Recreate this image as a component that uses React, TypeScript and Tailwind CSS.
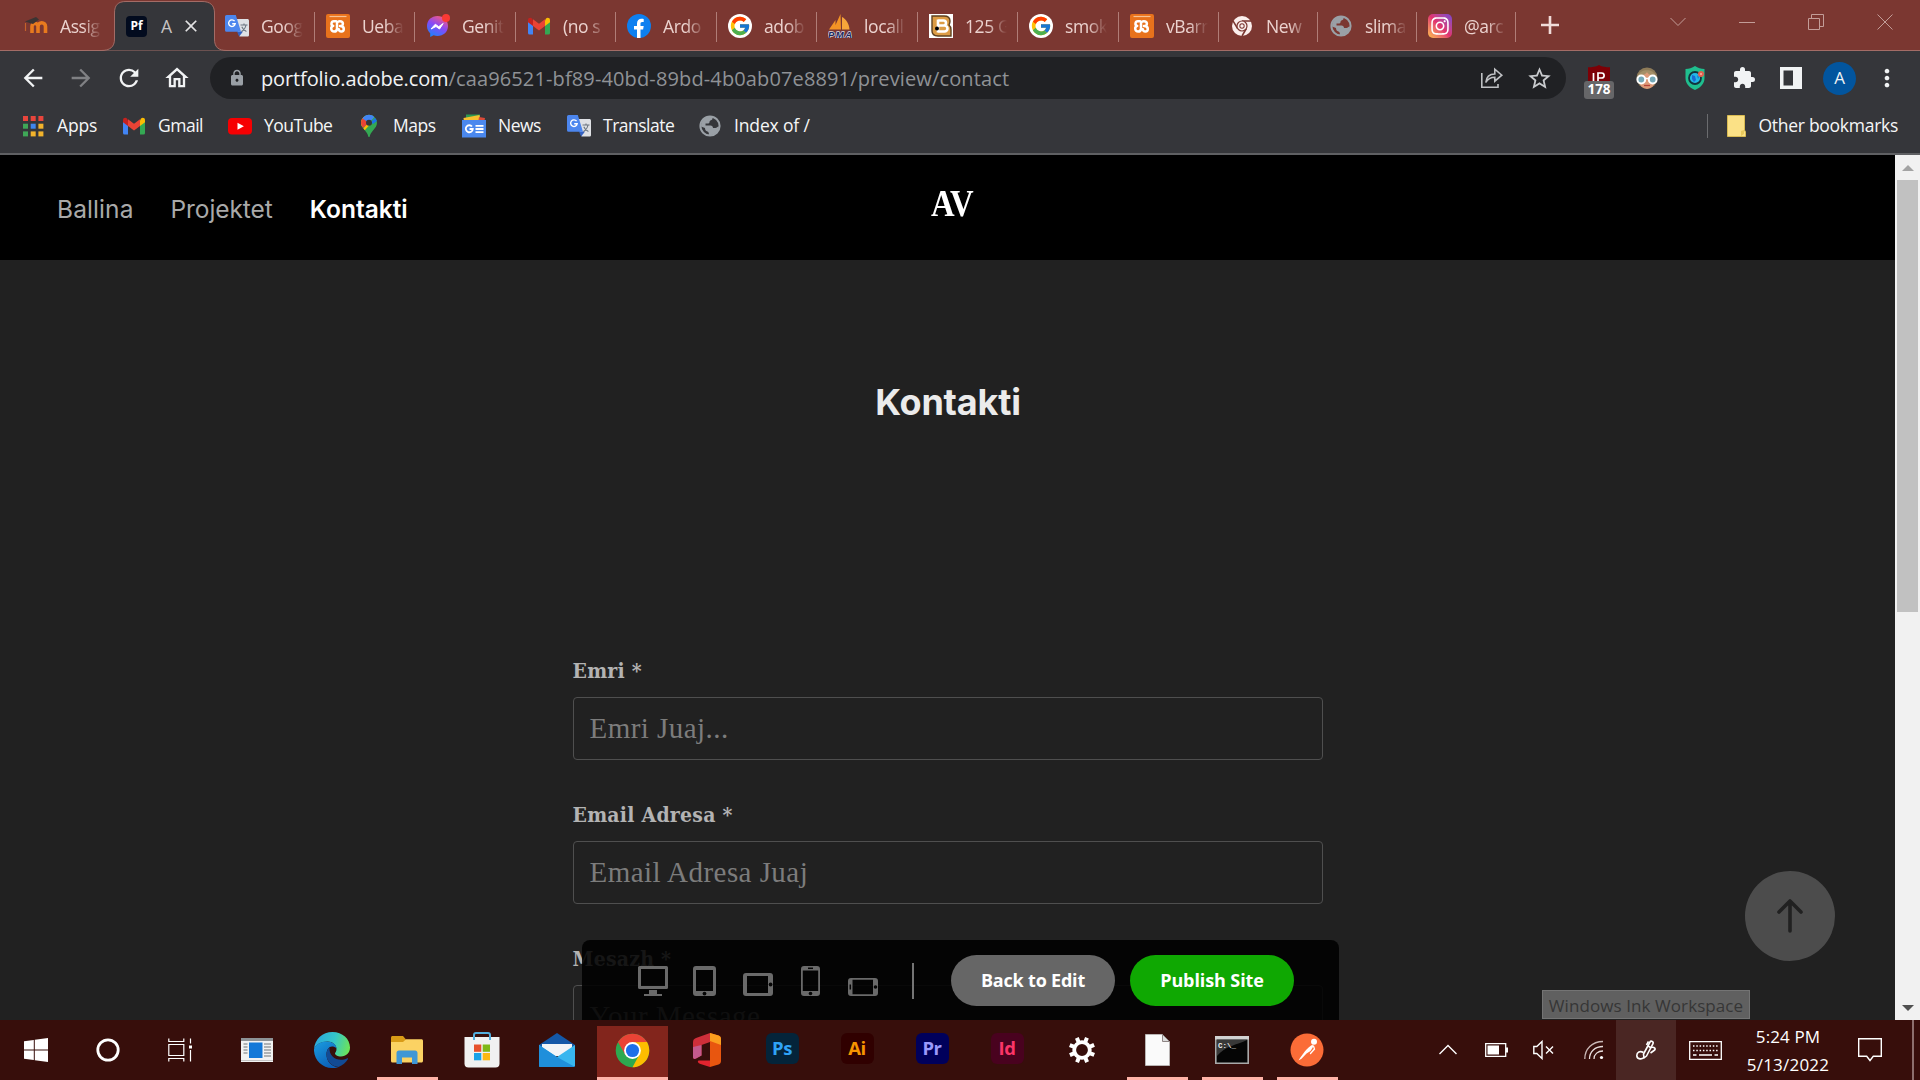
import React from "react";
import { MdArrowBack, MdArrowForward, MdRefresh, MdOutlineHome, MdLock, MdStarBorder, MdExtension, MdMoreVert, MdClose } from "react-icons/md";
import { FcGoogle } from "react-icons/fc";
import { FaInstagram } from "react-icons/fa";

/* ---------- site and bookmark icons ---------- */

const Moodle = () => (
  <svg viewBox="0 0 24 24" className="size-6">
    <path d="M8 19V12.5a3 3 0 0 1 6 0V19M14 12.5a3.4 3.4 0 0 1 7.5 0V19" fill="none" stroke="#e87a1e" strokeWidth="3.6" />
    <path d="M1.5 9v8" stroke="#c4622a" strokeWidth="1.2" />
    <path d="M1 7.5 12 3l3 2.5-6 4.5Z" fill="#3b3433" />
  </svg>
);

const PfIcon = () => (
  <div className="flex size-[21px] items-center justify-center rounded bg-[#020b1e] font-['Open_Sans',sans-serif] text-[12px] font-bold leading-none text-white">Pf</div>
);

const Translate = () => (
  <svg viewBox="0 0 24 24" className="size-6">
    <path d="M9 5h13.4c.9 0 1.6.7 1.6 1.6V21c0 .9-.7 1.6-1.6 1.6H14.5Z" fill="#dfe1e5" />
    <path d="m12 17.5 6 0-3.8 5Z" fill="#3461c1" />
    <path d="M1.6 1h9.2L16 17.8H1.6A1.6 1.6 0 0 1 0 16.200V2.600A1.600 1.600 0 0 1 1.600 1Z" fill="#4c86ee" />
    <path d="M9.600 7.200A3.300 3.300 0 1 0 10.200 9.700H7.200" fill="none" stroke="#fff" strokeWidth="1.400" />
    <path d="M15.500 11h7M19 9.400V11M21 11c-.6 3-2.600 5.400-4.600 6.500M16.800 12.800c.8 2 2.400 3.800 4.600 4.700" fill="none" stroke="#6b7580" strokeWidth="1.100" />
  </svg>
);

const Xampp = () => (
  <svg viewBox="0 0 24 24" className="size-6">
    <rect width="24" height="24" rx="2" fill="#e8721c" />
    <path d="M3.500 2.500h17" stroke="#f6c294" strokeWidth="1.200" />
    <path d="M10 7.200H8a2.400 2.400 0 0 0-.8 4.700A2.900 2.900 0 1 0 11 15V9.500c0-3 5.700-3 5.900.2.100 1.500-1 2.300-2.900 2.300 2.500 0 3.800 1 3.800 2.900 0 3.200-4.800 3.600-5 .3" fill="none" stroke="#fff" strokeWidth="2.500" strokeLinecap="round" strokeLinejoin="round" />
  </svg>
);

const Messenger = () => (
  <svg viewBox="0 0 24 24" className="size-6">
    <defs>
      <linearGradient id="msg" x1="0.2" y1="1" x2="0.7" y2="0">
        <stop offset="0" stopColor="#1486ff" />
        <stop offset=".55" stopColor="#8a48f6" />
        <stop offset="1" stopColor="#f55a80" />
      </linearGradient>
    </defs>
    <path d="M11.500 2C5.500 2 1 6.200 1 12c0 3 1.200 5.400 3.200 7.200V23l3.400-1.700c1.200.4 2.500.6 3.900.6 6 0 10.500-4.300 10.500-10S17.500 2 11.500 2Z" fill="url(#msg)" />
    <path d="m5 15 4.300-4.800 3.400 2.500L17.200 9.500 13.500 15l-3.500-2.500Z" fill="#fff" stroke="#fff" strokeLinejoin="round" />
    <circle cx="20" cy="4" r="4" fill="#fb3a34" />
  </svg>
);

const Gmail = () => (
  <svg viewBox="0 0 24 24" className="size-6">
    <path d="M1 6.500V19a1.600 1.600 0 0 0 1.600 1.600H6V11Z" fill="#4285f4" />
    <path d="M23 6.500V19a1.600 1.600 0 0 1-1.600 1.600H18V11Z" fill="#34a853" />
    <path d="M18 6.500V12l5-3.800V6.200c0-2.400-2.400-3-4-1.800Z" fill="#fbbc04" />
    <path d="M1 6.200V8.200L6 12V6.500L5 4.400C3.400 3.200 1 3.800 1 6.200Z" fill="#c5221f" />
    <path d="M6 12V5.200l6 4.500 6-4.500V12l-6 4.500Z" fill="#ea4335" />
  </svg>
);

const Facebook = () => (
  <svg viewBox="0 0 24 24" className="size-6">
    <circle cx="12" cy="12" r="12" fill="#0d7ff0" />
    <path d="M10 24v-8.500H7V12h3V9.500C10 6.400 11.800 4.800 14.500 4.800c1 0 2.200.2 2.200.2v3h-1.500c-1.300 0-1.700.8-1.700 1.600V12h3.200l-.6 3.500h-2.600V24Z" fill="#fff" />
  </svg>
);

const Google = () => (
  <div className="flex size-6 items-center justify-center rounded-full bg-white">
    <FcGoogle className="size-[22px]" />
  </div>
);

const Pma = () => (
  <svg viewBox="0 0 24 24" className="size-6">
    <path d="M12.500 0 13 15.500H5.500ZM7.500 6v9.500H1Z" fill="#f39325" />
    <path d="M14 3c4 2 7 6.500 7.500 12.500h-7.500Z" fill="#f7a63a" />
    <text x="0" y="23.500" textLength="24" fontFamily="Liberation Sans, sans-serif" fontSize="9.500" fontWeight="bold" fontStyle="italic" fill="#20285e" stroke="#d9d6e2" strokeWidth="1.400" paintOrder="stroke">PMA</text>
  </svg>
);

const BIcon = () => (
  <svg viewBox="0 0 24 24" className="size-6">
    <path d="M0 0h24v24H0Z" fill="#fff" />
    <path d="M3 2h12c4 0 6 2 6 5 0 2-.5 3-1 4 1.500 1 2 3 2 5v6H9c-4 0-6-2-6-5Z" fill="#dc9c45" stroke="#5d4120" strokeWidth="1.400" />
    <path d="M9 6.500h5.500a2.400 2.400 0 0 1 0 5H9h6.500a3 3 0 0 1 0 6H9M9 5.500v13" fill="none" stroke="#fff" strokeWidth="2.600" />
    <circle cx="8" cy="14.500" r="2" fill="#000" />
  </svg>
);

const ChromeWhite = () => (
  <svg viewBox="0 0 24 24" className="size-6">
    <circle cx="12" cy="12" r="10" fill="#fbeeec" />
    <path d="M12 7H21M7.600 14.500 3 6.800M16.400 14.500 12 22" stroke="#7b3731" strokeWidth="1.500" />
    <circle cx="12" cy="12" r="5.600" fill="#7b3731" />
    <circle cx="12" cy="12" r="4.400" fill="#fbeeec" />
    <circle cx="12" cy="12" r="2.700" fill="#7b3731" />
    <circle cx="12" cy="12" r="1.700" fill="#fbeeec" />
  </svg>
);

const Globe = () => (
  <svg viewBox="0 0 24 24" className="size-6">
    <circle cx="12" cy="12" r="9.600" fill="none" stroke="#9aa0a6" strokeWidth="2" />
    <path d="M3 12.500C3 6 8 2 14 2.500c1 1.500.5 3-.5 3.500s-2 .5-2 2c0 1-.8 1.500-2 1.500H7.500v2h5c1.500 0 2.500 1.200 2.500 2.500h2.500c1.500 0 1.500-1.500 3.500-1.500-.5 5.500-4.500 9-10 9 0-2-.2-3.500-1.500-4-2-.5-2.500-2-2.500-3.500Z" fill="#9aa0a6" />
  </svg>
);

const Insta = () => (
  <div className="flex size-6 items-center justify-center rounded-[5px] bg-linear-to-tr from-[#fdbd45] via-[#e0316f] to-[#7a3fd0]">
    <FaInstagram className="size-5 text-white" />
  </div>
);

const AppsGrid = () => (
  <svg viewBox="0 0 24 24" className="size-6">
    {["#e8453c", "#e8453c", "#e8453c", "#3fa757", "#3f86ee", "#f2b32c", "#3fa757", "#f2b32c", "#f2b32c"].map((c, i) => (
      <rect key={i} x={2 + (i % 3) * 7.700} y={2 + Math.floor(i / 3) * 7.700} width="5" height="5" fill={c} />
    ))}
  </svg>
);

const YouTube = () => (
  <svg viewBox="0 0 24 24" className="size-6">
    <rect y="4" width="24" height="16.500" rx="4" fill="#f60002" />
    <path d="m9.500 8.800 6.400 3.500-6.400 3.500Z" fill="#fff" />
  </svg>
);

const MapsPin = () => (
  <svg viewBox="0 0 24 24" className="size-6">
    <defs>
      <clipPath id="pin"><path d="M12 .8a8 8 0 0 0-8 8c0 3 1.600 5 3.600 7.300 2 2.500 3.200 4 3.700 6.400.2.800 1.200.8 1.400 0 .5-2.400 1.700-3.900 3.700-6.400C18.400 13.800 20 11.800 20 8.800a8 8 0 0 0-8-8Z" /></clipPath>
    </defs>
    <g clipPath="url(#pin)">
      <path d="M0 0h24v24H0Z" fill="#34a853" />
      <path d="M2 17 14 3 2 2Z" fill="#fbbc04" />
      <path d="M2 20 8 16 16 7 12 7Z" fill="#fbbc04" />
      <path d="M2 8 6 3.500 12 8.500 6 14Z" fill="#ea4335" />
      <path d="M5 4 10 0H20L12 9Z" fill="#4285f4" />
      <path d="M14 8 20 2v5l-4 3Z" fill="#1a73e8" />
    </g>
    <circle cx="12" cy="8.800" r="3" fill="#35363a" />
  </svg>
);

const News = () => (
  <svg viewBox="0 0 24 24" className="size-6">
    <path d="M4 .5h14V9H4Z" fill="#2f9b50" />
    <path d="m1.500 4 16-3 1 7H2Z" fill="#f7c02f" />
    <path d="m17 3 6 1-1 5h-6Z" fill="#dc4a38" />
    <path d="M0 6h24v17.500H0Z" fill="#4a88ee" />
    <path d="M10 12.500A3.500 3.500 0 1 0 10.800 15H7.500M13.500 11.800h8M13.500 15h8M13.500 18.200h8" fill="none" stroke="#fff" strokeWidth="1.800" />
  </svg>
);

/* ---------- toolbar icons ---------- */

const Share = () => (
  <svg viewBox="0 0 24 24" className="size-6 text-[#bfc1c4]" fill="none" stroke="currentColor" strokeWidth="1.600">
    <path d="M1.800 7v14.200H18V18" />
    <path d="M5.800 16.500c.5-5.500 4-8.500 9-8.500V3.200l7 6-7 6v-4c-4 0-7 1.500-9 5.300Z" />
  </svg>
);

const UBlock = () => (
  <div className="relative flex h-[42px] w-[30px] justify-center pt-2">
    <svg viewBox="0 0 22 22" className="size-[22px]">
      <path d="M11 0c3 2 7 2.200 11 2.200V16H0V2.200C4 2.200 8 2 11 0Z" fill="#7d0006" />
      <path d="M5.500 8v8M10 16V8h3.500c3.500 0 3.500 5 0 5H10" fill="none" stroke="#fff" strokeWidth="1.700" />
    </svg>
    <span className="absolute bottom-0 left-0 flex h-[18px] w-[30px] items-center justify-center rounded-[3px] bg-[#666668] font-['Open_Sans',sans-serif] text-[13.500px] font-bold leading-none text-white">178</span>
  </div>
);

const Face = () => (
  <svg viewBox="0 0 22 22" className="size-[22px]">
    <circle cx="11" cy="11" r="10.500" fill="#8e7b58" />
    <ellipse cx="11" cy="13.500" rx="8" ry="8.500" fill="#dd9a78" />
    <path d="M2 9C4 2 17 1 20 9c-5 0-8-2-9-4-1 2-5 4-9 4Z" fill="#a48f67" />
    <circle cx="5.300" cy="12.500" r="3.900" fill="#75a9b8" stroke="#fff" strokeWidth="2" />
    <circle cx="16.700" cy="12.500" r="3.900" fill="#75a9b8" stroke="#fff" strokeWidth="2" />
    <path d="M9 11.500h4" stroke="#fff" strokeWidth="1.500" />
    <path d="M8 18.500h6" stroke="#b5443a" strokeWidth="1.300" />
  </svg>
);

const Shield = () => (
  <svg viewBox="0 0 20 24" className="h-6 w-5">
    <path d="M10 0c3 2 6 3 9.500 3v9c0 6-4 9.500-9.500 12C4.500 21.500.5 18 .5 12V3C4 3 7 2 10 0Z" fill="#1fbf8e" />
    <circle cx="10" cy="12" r="6" fill="#22b8e6" stroke="#12343d" strokeWidth="1.800" />
    <path d="m7 9 3 1 1 4-2 2-2-3ZM12 9l2 2-1 2Z" fill="#1a6ad0" />
    <circle cx="16" cy="8" r="3" fill="#e2604e" />
    <circle cx="16" cy="8" r="1" fill="#f6b5a8" />
  </svg>
);

/* ---------- preview bar icons ---------- */

const Desktop = () => (
  <svg viewBox="0 0 30 30" className="h-[30px] w-[30px]" fill="#6a6a6a">
    <path fillRule="evenodd" d="M1.500 0h27A1.500 1.500 0 0 1 30 1.500v20a1.500 1.500 0 0 1-1.500 1.500h-27A1.500 1.500 0 0 1 0 21.500v-20A1.500 1.500 0 0 1 1.500 0ZM3 3v17h24V3Z" />
    <path d="M11 24h8v4h5v2H6v-2h5Z" />
  </svg>
);

const Tablet = () => (
  <svg viewBox="0 0 23 30" className="h-[30px] w-[23px]">
    <path fill="#6a6a6a" fillRule="evenodd" d="M3 0h17a3 3 0 0 1 3 3v24a3 3 0 0 1-3 3H3a3 3 0 0 1-3-3V3a3 3 0 0 1 3-3ZM3 4v21h17V4Z" />
    <circle cx="11.500" cy="27.600" r="1.900" fill="#050505" />
  </svg>
);

const TabletWide = () => (
  <svg viewBox="0 0 30 23" className="h-[23px] w-[30px]">
    <path fill="#6a6a6a" fillRule="evenodd" d="M3 0h24a3 3 0 0 1 3 3v17a3 3 0 0 1-3 3H3a3 3 0 0 1-3-3V3a3 3 0 0 1 3-3ZM4 3v17h21V3Z" />
    <circle cx="27.600" cy="11.500" r="1.900" fill="#050505" />
  </svg>
);

const Phone = () => (
  <svg viewBox="0 0 19 30" className="h-[30px] w-[19px]">
    <path fill="#6a6a6a" fillRule="evenodd" d="M3 0h13a3 3 0 0 1 3 3v24a3 3 0 0 1-3 3H3a3 3 0 0 1-3-3V3a3 3 0 0 1 3-3ZM1.800 4.500v20.500h15.400V4.500Z" />
    <path d="M7 2.300h5" stroke="#050505" strokeWidth="1.500" />
    <circle cx="9.500" cy="27.500" r="1.800" fill="#050505" />
  </svg>
);

const PhoneWide = () => (
  <svg viewBox="0 0 30 18" className="h-[18px] w-[30px]">
    <path fill="#6a6a6a" fillRule="evenodd" d="M3 0h24a3 3 0 0 1 3 3v12a3 3 0 0 1-3 3H3a3 3 0 0 1-3-3V3a3 3 0 0 1 3-3ZM4.500 1.800v14.400H25V1.800Z" />
    <path d="M2.300 6.500v5" stroke="#050505" strokeWidth="1.500" />
    <circle cx="27.500" cy="9" r="1.800" fill="#050505" />
  </svg>
);

/* ---------- taskbar icons ---------- */

const Windows = () => (
  <svg viewBox="0 0 24 24" className="size-6" fill="#fff">
    <path d="M0 3.300 9.800 2v9.500H0ZM10.800 1.800 24 0v11.500H10.800ZM0 12.500h9.800V22L0 20.700ZM10.800 12.500H24V24l-13.200-1.800Z" />
  </svg>
);

const Cortana = () => (
  <svg viewBox="0 0 24 24" className="size-6"><circle cx="12" cy="12" r="10.200" fill="none" stroke="#fff" strokeWidth="2.800" /></svg>
);

const TaskView = () => (
  <svg viewBox="0 0 24 24" className="size-6" fill="none" stroke="#fff" strokeWidth="1.200">
    <path d="M.8 6.500h15v11h-15ZM.8.500V3.500h15V.5M.8 23.500v-3h15v3M22.500.5v5M22.500 12v11.500" />
    <path d="M21 7.500h3v3h-3Z" fill="#fff" stroke="none" />
  </svg>
);

const Reader = () => (
  <svg viewBox="0 0 32 24" className="h-6 w-8">
    <path d="M0 0h32v24H0Z" fill="#f2f2f2" />
    <path d="M0 0h32v3H0Z" fill="#8d9296" />
    <path d="M8 4.500h13.500V20H8Z" fill="#1378d8" />
    <path d="M2.500 6h4M2.500 9h4M2.500 12h4M2.500 15h4M23 6h7M23 9h7M23 12h7M23 15h7M23 18h7" stroke="#6e7479" strokeWidth="1.200" />
    <path d="M0 22.500h32" stroke="#c4c4c4" />
  </svg>
);

const Edge = () => (
  <svg viewBox="0 0 36 36" className="size-9">
    <defs>
      <linearGradient id="e1" x1="0" y1="0.300" x2="1" y2="0.500">
        <stop offset="0" stopColor="#2aa6dd" /><stop offset=".55" stopColor="#35c6c9" /><stop offset="1" stopColor="#6be35b" />
      </linearGradient>
      <linearGradient id="e2" x1="0" y1="0" x2="0.600" y2="1">
        <stop offset="0" stopColor="#1a9de0" /><stop offset="1" stopColor="#0c5fb8" />
      </linearGradient>
    </defs>
    <path d="M0 17C.8 7 8.500 0 18.500 0 28.500 0 36 7 36 15.500c0 5.500-4 9-9 9-3.500 0-6-1.500-6-3 0-1 1.500-1.800 1.500-4.500 0-4-4-7.500-9-7.500C7 9.500 2 12.500 0 17Z" fill="url(#e1)" />
    <path d="M0 17c2-5 7-7.500 13-7.500 5.500 0 9.500 3 9.500 7-1-1.500-3-2-4.500-2-3 0-5.500 3-5.500 8 0 7 5 12 12 13C21.500 36 19.500 36 18 36 8 36-.5 27.500 0 17Z" fill="url(#e2)" />
    <path d="M15.500 15.500c-2 1.300-3 4-3 7 0 6.500 5 12 12 12.500 4-1.500 7.500-4.500 9.500-8 .3-.7-.3-1-.8-.7-2 1-4 1.500-6.200 1.500-6.500 0-12-4.500-11.500-12.300Z" fill="#124a94" />
  </svg>
);

const Explorer = () => (
  <svg viewBox="0 0 32 28" className="h-7 w-8">
    <path d="M0 1.500C0 .7.700 0 1.500 0H12l3 3.500V7H0Z" fill="#d99b17" />
    <path d="M0 6h12l3-2.700h15.500c.8 0 1.500.7 1.500 1.500V25c0 .8-.7 1.500-1.500 1.500h-29A1.500 1.500 0 0 1 0 25Z" fill="#fbd263" />
    <path d="M5.500 28V17c0-1.400 1-2.500 2.500-2.500h16c1.500 0 2.500 1.100 2.500 2.500v11H21v-6.500H11V28Z" fill="#3f97d6" />
  </svg>
);

const Store = () => (
  <svg viewBox="0 0 36 36" className="size-9">
    <path d="M10 7V3a2 2 0 0 1 2-2h12a2 2 0 0 1 2 2v4" fill="none" stroke="#53aede" strokeWidth="2" />
    <path d="M.5 5h35v26.500a4 4 0 0 1-4 4h-27a4 4 0 0 1-4-4Z" fill="#f1f1f1" />
    <path d="M10 5V8M26 5V8" stroke="#53aede" strokeWidth="2" />
    <path d="M10 12.500h7.300v7.300H10Z" fill="#e6502a" />
    <path d="M18.700 12.500H26v7.300h-7.300Z" fill="#7fb818" />
    <path d="M10 21h7.300v7.300H10Z" fill="#1aa2e8" />
    <path d="M18.700 21H26v7.300h-7.300Z" fill="#fbb813" />
  </svg>
);

const Mail = () => (
  <svg viewBox="0 0 36 34" className="h-[34px] w-9">
    <path d="M0 12 18 0l18 12v5H0Z" fill="#1458a8" />
    <path d="M3 11h30v12H3Z" fill="#f1f4f7" />
    <path d="M0 12l18 12L36 12v20.500c0 .8-.7 1.500-1.500 1.500h-33A1.500 1.500 0 0 1 0 32.500Z" fill="#38b6ef" />
    <path d="M0 12 18 24 36 34H1.500A1.500 1.500 0 0 1 0 32.500Z" fill="#1f8fdb" />
  </svg>
);

const Chrome = () => (
  <svg viewBox="0 0 48 48" className="size-[35px]">
    <circle cx="24" cy="24" r="23" fill="#2da94f" />
    <path d="M43.900 12.500A23 23 0 0 1 24 47L33.500 29.500 24 12.500Z" fill="#fdbd00" />
    <path d="M4.100 12.500a23 23 0 0 1 39.800 0L24 12.800 14.500 30.500Z" fill="#ea4335" />
    <circle cx="24" cy="24" r="11.500" fill="#fff" />
    <circle cx="24" cy="24" r="9" fill="#1e6fe8" />
  </svg>
);

const Office = () => (
  <svg viewBox="0 0 28 34" className="h-[34px] w-7">
    <path d="M0 9.500C0 7 1 5.700 3 5L17 0v9L8.500 12v10.500L3 25.500c-2 1-3 0-3-1.500Z" fill="#cf2f3a" />
    <path d="M17 0l8.500 2.500C27 3 28 4 28 6v22c0 2-1 3-2.500 3.500L17 34Z" fill="#e8560f" />
    <path d="M17 0l8.500 2.500C27 3 28 4 28 6v6L17 8Z" fill="#fb9e1e" />
    <path d="M6 27.500h11V34L7.500 31C4 29.800 4.500 27.500 6 27.500Z" fill="#e2242f" />
    <path d="M0 14v10c0 1.500 1 2.500 3 1.500l5.500-3V12Z" fill="#c45a8c" />
  </svg>
);

const Tile = ({ label, cls }: { label: string; cls: string }) => (
  <div className={`-mt-[3px] flex h-[31px] w-[33px] items-center justify-center rounded-[6px] pb-px font-['Open_Sans',sans-serif] text-[18.500px] font-bold leading-none tracking-[-0.400px] ${cls}`}>{label}</div>
);

const Gear = () => (
  <svg viewBox="0 0 28 28" className="size-7">
    <circle cx="14" cy="14" r="7.800" fill="none" stroke="#fff" strokeWidth="3.800" />
    <path d="M14 .8v5M14 22.200v5M.8 14h5M22.200 14h5M4.700 4.700l3.500 3.500M19.800 19.800l3.500 3.500M4.700 23.300l3.500-3.500M19.800 8.200l3.500-3.500" stroke="#fff" strokeWidth="4" transform="rotate(22 14 14)" />
  </svg>
);

const Doc = () => (
  <svg viewBox="0 0 25 32" className="h-8 w-[25px]">
    <path d="M.5.5h17l7 7v24H.5Z" fill="#fafafa" stroke="#b9b4b3" />
    <path d="M17.500.5v7h7Z" fill="#dcdcdc" stroke="#8e8584" />
  </svg>
);

const Cmd = () => (
  <svg viewBox="0 0 34 28" className="h-7 w-[34px]">
    <path d="M.8.800h32.400v26.400H.8Z" fill="#050505" stroke="#a9a9a9" strokeWidth="1.600" />
    <path d="M0 0h34v3.500H0Z" fill="#d2d2d2" />
    <path d="M2 4h30C22 9 10 10 2 20Z" fill="#383838" />
    <text x="3" y="12" fontFamily="Liberation Mono, monospace" fontSize="7.500" fontWeight="bold" fill="#eee">C:\_</text>
  </svg>
);

const Postman = () => (
  <svg viewBox="0 0 34 34" className="size-[34px]">
    <circle cx="17" cy="17" r="16.500" fill="#fb6c37" />
    <circle cx="24" cy="8.800" r="3" fill="#fff" />
    <path d="M22.800 11.500c-2.500 1-6 4.500-8 7L10 25l-1.500 2.500 3-1.800 5-5.200 4-2.500 2.500-4Z" fill="#fff" />
    <path d="m23.500 13 1 3-4 4.500" fill="none" stroke="#fff" strokeWidth="1.300" strokeLinecap="round" />
  </svg>
);

/* ---------- data ---------- */

const tabs: [string, () => React.ReactElement, string][] = [
  ["Goog", Translate, "w-[101px]"],
  ["Ueba", Xampp, "w-[100px]"],
  ["Genit", Messenger, "w-[101px]"],
  ["(no s", Gmail, "w-[100px]"],
  ["Ardo", Facebook, "w-[101px]"],
  ["adob", Google, "w-[100px]"],
  ["locall", Pma, "w-[101px]"],
  ["125 G", BIcon, "w-[100px]"],
  ["smok", Google, "w-[101px]"],
  ["vBarr", Xampp, "w-[100px]"],
  ["New", ChromeWhite, "w-[99px]"],
  ["slima", Globe, "w-[99px]"],
  ["@arc", Insta, "w-[99px]"],
];

const bookmarks: [string, () => React.ReactElement, string][] = [
  ["Apps", AppsGrid, "w-[101px]"],
  ["Gmail", Gmail, "w-[106px]"],
  ["YouTube", YouTube, "w-[129px]"],
  ["Maps", MapsPin, "w-[105px]"],
  ["News", News, "w-[105px]"],
  ["Translate", Translate, "w-[131px]"],
  ["Index of /", Globe, "w-[140px]"],
];

const apps: [React.ReactElement, string][] = [
  [<Reader />, ""], [<Edge />, ""], [<Explorer />, "run"], [<Store />, ""], [<Mail />, ""], [<Chrome />, "active"], [<Office />, ""],
  [<Tile label="Ps" cls="bg-[#04243a] text-[#2fa3f7]" />, ""],
  [<Tile label="Ai" cls="bg-[#300000] text-[#f79500]" />, ""],
  [<Tile label="Pr" cls="bg-[#00005b] text-[#9a99fc]" />, ""],
  [<Tile label="Id" cls="bg-[#49021f] text-[#fb3567]" />, ""],
  [<Gear />, ""], [<Doc />, "run"], [<Cmd />, "run"], [<Postman />, "run"],
];

const fade = "[mask-image:linear-gradient(to_right,#000_55%,transparent_100%)]";

/* ---------- sections ---------- */

function TabStrip() {
  return (
    <div className="flex h-[51px] border-b border-[#a36c66] bg-[#7b3731] text-[17.500px] text-[#ecd3cf]">
      <div className="flex w-[114px] items-center gap-3 pl-6 pt-0.5">
        <Moodle />
        <span className={`w-[42px] overflow-hidden whitespace-nowrap tracking-[-0.400px] ${fade}`}>Assig</span>
      </div>
      <div className="relative h-[51px] w-[100px]">
        <svg viewBox="0 0 126 51" className="absolute -left-[13px] top-0 h-[51px] w-[126px]">
          <path d="M0 50.500C9 50.500 13.500 47 13.500 39V13C13.500 5 17 1.500 25 1.500h76c8 0 12.500 3.500 12.500 11.500v26c0 8 3.500 11.500 12.500 11.500" fill="#35363a" stroke="#a36c66" />
        </svg>
        <div className="relative flex h-[50px] items-center pl-3 pt-0.5">
          <PfIcon />
          <span className="ml-[14px] w-[12px] text-[#c6c3c3]">A</span>
          <MdClose className="ml-[8px] size-5 text-[#e3e3e4]" />
        </div>
      </div>
      {tabs.map(([label, Icon, w], i) => (
        <div key={i} className={`flex h-[50px] shrink-0 items-center ${w}`}>
          <div className="flex flex-1 items-center gap-3 pl-[11px] pt-0.5">
            <Icon />
            <span className={`w-[42px] overflow-hidden whitespace-nowrap tracking-[-0.400px] ${fade}`}>{label}</span>
          </div>
          <div className="mt-[3px] h-[30px] w-px bg-[#b07d77]" />
        </div>
      ))}
      <svg viewBox="0 0 18 18" className="ml-[25px] mt-4 size-[18px]"><path d="M9 0v18M0 9h18" stroke="#f0dcd9" strokeWidth="2.600" /></svg>
      <div className="ml-auto mr-[27px] flex h-[43px] items-center gap-[53px] text-[#c39d98]">
        <svg viewBox="0 0 16 16" className="size-4" fill="none" stroke="currentColor"><path d="m.5 4 7.500 7.500L15.500 4" /></svg>
        <svg viewBox="0 0 16 16" className="size-4" fill="none" stroke="currentColor"><path d="M0 8.500h16" /></svg>
        <svg viewBox="0 0 16 16" className="size-4" fill="none" stroke="currentColor"><path d="M.5 4.500h11v11H.5ZM3.500 4V.5h12v12H12" /></svg>
        <svg viewBox="0 0 16 16" className="size-4" fill="none" stroke="currentColor"><path d="m.5.500 15 15M15.500.500l-15 15" /></svg>
      </div>
    </div>
  );
}

function Toolbar() {
  return (
    <div className="flex h-[54px] items-center bg-[#35363a] pl-[19px] text-[#f1f3f4]">
      <div className="flex w-[191px] items-center gap-5">
        <MdArrowBack className="size-7" />
        <MdArrowForward className="size-7 text-[#808184]" />
        <MdRefresh className="size-7" />
        <MdOutlineHome className="size-7" />
      </div>
      <div className="flex h-[42px] w-[1356px] items-center rounded-full bg-[#202124] pl-[18px] pr-[13px] text-[20px]">
        <MdLock className="size-[18px] text-[#9aa0a6]" />
        <div className="ml-[15px] flex whitespace-nowrap pt-0.5">
          <span className="tracking-[-0.130px]">portfolio.adobe.com</span>
          <span className="tracking-[0.130px] text-[#8f9296]">/caa96521-bf89-40bd-89bd-4b0ab07e8891/preview/contact</span>
        </div>
        <div className="ml-auto flex items-center gap-[22px]">
          <Share />
          <MdStarBorder className="size-[27px] text-[#c9cbce]" />
        </div>
      </div>
      <div className="ml-[18px] flex items-center">
        <UBlock />
        <div className="ml-[22px]"><Face /></div>
        <div className="ml-[27px]"><Shield /></div>
        <MdExtension className="ml-[27px] size-6" />
        <svg viewBox="0 0 22 22" className="ml-6 size-[22px]"><path fillRule="evenodd" fill="#f1f3f4" d="M0 0h22v22H0ZM3.500 3.500v15H13v-15Z" /></svg>
        <div className="ml-[21px] flex size-[33px] items-center justify-center rounded-full bg-[#02559e] text-[17px]">A</div>
        <MdMoreVert className="ml-[17px] size-7" />
      </div>
    </div>
  );
}

function Bookmarks() {
  return (
    <div className="flex h-[50px] items-center border-b-2 border-[#5f6063] bg-[#35363a] pb-[7px] pl-[21px] text-[17.500px] text-[#f5f6f7]">
      {bookmarks.map(([label, Icon, w]) => (
        <div key={label} className={`flex shrink-0 items-center gap-3 ${w}`}>
          <Icon />
          <span className={`whitespace-nowrap ${label === "Index of /" || label === "Apps" ? "tracking-[-0.150px]" : "tracking-[-0.500px]"}`}>{label}</span>
        </div>
      ))}
      <div className="ml-auto flex items-center pr-[22px]">
        <div className="h-6 w-px bg-[#6b6c6f]" />
        <svg viewBox="0 0 19 22" className="ml-[19px] h-[22px] w-[19px]">
          <path d="M.5.500h17V15l1 2v4.500H.5Z" fill="#fbe186" stroke="#d9bb52" />
          <path d="M14 21v-5l3-1v4" fill="#e9c95c" />
        </svg>
        <span className="ml-[13px] tracking-[-0.280px]">Other bookmarks</span>
      </div>
    </div>
  );
}

function Field({ label, placeholder }: { label: string; placeholder: string }) {
  return (
    <div className="h-[144px]">
      <div className="flex h-[42px] items-center pb-2.5 font-['DejaVu_Serif_Condensed','DejaVu_Serif',serif] text-[21px] font-bold tracking-[0.240px] text-[#b3b3b3]">{label}</div>
      <div className="flex h-[63px] items-center rounded border border-[#4f4f4f] px-4 font-['Liberation_Serif',serif] text-[29px] tracking-[0.450px] text-[#7c7c7c]">{placeholder}</div>
    </div>
  );
}

function Page() {
  return (
    <div className="relative flex h-[865px] overflow-hidden">
      <div className="flex-1 bg-[#212121]">
        <header className="flex h-[105px] items-center bg-black pl-[57px] font-[Inter,sans-serif] text-[24.500px] text-[#a9a9a9]">
          <nav className="flex w-[874px] gap-[37px] pt-1">
            <span className="tracking-[0.100px]">Ballina</span>
            <span className="tracking-[-0.080px]">Projektet</span>
            <span className="font-semibold text-white">Kontakti</span>
          </nav>
          <span className="-mt-[10px] origin-left scale-x-[0.860] font-['Liberation_Serif',serif] text-[38px] font-bold leading-none tracking-[-0.500px] text-white">AV</span>
        </header>
        <h1 className="pl-px pt-[118px] text-center font-[Inter,sans-serif] text-[36px] font-bold leading-[48px] tracking-[-0.200px] text-[#ebebeb]">Kontakti</h1>
        <form className="mx-auto mt-[229px] w-[750px]">
          <Field label="Emri *" placeholder="Emri Juaj..." />
          <Field label="Email Adresa *" placeholder="Email Adresa Juaj" />
          <Field label="Mesazh *" placeholder="Your Message" />
        </form>
      </div>
      <div className="flex w-[25px] flex-col items-center bg-[#f1f1f1]">
        <div className="flex h-[25px] items-center"><div className="border-x-[6px] border-b-[6px] border-x-transparent border-b-[#a3a3a3]" /></div>
        <div className="h-[432px] w-[21px] bg-[#c1c1c1]" />
        <div className="mt-auto flex h-[25px] items-center"><div className="border-x-[6px] border-t-[6px] border-x-transparent border-t-[#505050]" /></div>
      </div>

      <div className="absolute bottom-0 left-[582px] flex h-20 w-[757px] items-center rounded-t-lg bg-black/88 pl-14 pt-px">
        <div className="flex h-[30px] items-end">
          <Desktop />
          <div className="ml-[25px]"><Tablet /></div>
          <div className="ml-[27px]"><TabletWide /></div>
          <div className="ml-[28px]"><Phone /></div>
          <div className="ml-[28px]"><PhoneWide /></div>
        </div>
        <div className="ml-[34px] h-9 w-0.5 bg-[#747474]" />
        <button className="ml-[37px] flex h-[51px] w-[164px] items-center justify-center rounded-full bg-[#666] text-[18px] font-bold tracking-[-0.200px] text-white">Back to Edit</button>
        <button className="ml-[15px] flex h-[51px] w-[164px] items-center justify-center rounded-full bg-[#0fa802] text-[18px] font-bold tracking-[-0.100px] text-white">Publish Site</button>
      </div>

      <button className="absolute left-[1745px] top-[716px] flex size-[90px] items-center justify-center rounded-full bg-[#4c4c4c]">
        <svg viewBox="0 0 26 34" className="h-[34px] w-[26px]" fill="none" stroke="#212121" strokeWidth="3.600" strokeLinecap="round" strokeLinejoin="round"><path d="M13 32V2M2 13 13 2l11 11" /></svg>
      </button>
      <div className="absolute bottom-px left-[1542px] flex h-[29px] w-[208px] items-center justify-center border border-[#747474] bg-[#606060] text-[17px] leading-none tracking-[0.080px] text-[#363636]">
        <span className="whitespace-nowrap pt-px">Windows Ink Workspace</span>
      </div>
    </div>
  );
}

function Taskbar() {
  return (
    <div className="flex h-[60px] bg-[#370e0b] text-white">
      <div className="flex w-[219.500px]">
        {[<Windows />, <Cortana />, <TaskView />].map((icon, i) => (
          <div key={i} className="flex w-[72px] items-center justify-center">{icon}</div>
        ))}
      </div>
      {apps.map(([icon, state], i) => (
        <div key={i} className="flex w-[75px] justify-center">
          <div className={`relative flex items-center justify-center ${state === "active" ? "mt-[6px] w-[71px] bg-[#82251c] pb-[6px]" : "w-[61px]"}`}>
            {icon}
            {state && <div className="absolute bottom-0 h-[3px] w-full bg-[#ffb3a8]" />}
          </div>
        </div>
      ))}
      <div className="ml-auto flex items-center">
        <svg viewBox="0 0 18 18" className="size-[18px]" fill="none" stroke="#fff" strokeWidth="1.400"><path d="m.5 13 8.500-8.500 8.500 8.500" /></svg>
        <svg viewBox="0 0 23 14" className="ml-7 h-3.5 w-[23px]"><path d="M.7.700h20v12.600H.7Z" fill="none" stroke="#fff" strokeWidth="1.300" /><path d="M2.500 2.500H14v9H2.500ZM21 4.500h2v5h-2Z" fill="#fff" /></svg>
        <svg viewBox="0 0 22 20" className="ml-[25px] h-5 w-[22px]" fill="none" stroke="#fff" strokeWidth="1.400"><path d="M.8 6.500h3L9 1.500v17l-5.200-5h-3ZM13 6.500l7 7M20 6.500l-7 7" /></svg>
        <svg viewBox="0 0 20 20" className="ml-[29px] size-5" fill="none" strokeWidth="1.300">
          <path d="M.8 19C.8 9 8 1.500 19 1.500" stroke="#c9b7b5" /><path d="M5.500 19c0-7.500 5.500-12.500 13.500-12.500M10 19c0-5 4-8 9-8" stroke="#e9dedd" /><circle cx="17.500" cy="17.500" r="1.600" fill="#fff" />
        </svg>
        <div className="ml-3 flex h-[60px] w-[60px] items-center justify-center bg-[#4a2623]">
          <svg viewBox="0 0 20 20" className="size-5" fill="none" stroke="#fff" strokeWidth="1.600" strokeLinejoin="round">
            <path d="M8 18 7.500 14 14 2c1-1.800 4-.2 3 1.600L10.500 16Z" /><path d="M10.500 5 12.500 1.500M7.500 12.500C4 10.500.8 12 .8 15.500c0 4.200 6 4.200 7.200 1.500M15 7.500c3.500-.8 5.500 1.500 3 3L14.500 13M12 6l3 1.700" />
          </svg>
        </div>
        <svg viewBox="0 0 33 19" className="ml-[13px] h-[19px] w-[33px]" fill="none" stroke="#fff">
          <path d="M.7.700h31.600v17.600H.7Z" strokeWidth="1.300" /><path d="M4 5h25M4 9.500h25" strokeWidth="1.400" strokeDasharray="1.500 1.800" /><path d="M4 14h3.500M10 14h13M25.500 14H29" strokeWidth="1.400" />
        </svg>
        <div className="ml-6 flex w-[84px] flex-col items-center pt-px text-[17px] leading-[28px] tracking-[0.200px]">
          <span className="whitespace-nowrap tracking-[0.100px]">5:24 PM</span>
          <span>5/13/2022</span>
        </div>
        <svg viewBox="0 0 24 24" className="ml-[28px] size-6" fill="none" stroke="#fff" strokeWidth="1.400"><path d="M.7.700h22.600v17.600h-8L12 22.500l-3.300-4.200h-8Z" /></svg>
        <div className="ml-[30px] mr-1.5 h-[60px] w-0.5 bg-[#8c6f6d]" />
      </div>
    </div>
  );
}

export default function App() {
  return (
    <div className="flex h-[1080px] w-[1920px] flex-col overflow-hidden font-['Open_Sans',sans-serif]">
      <TabStrip />
      <Toolbar />
      <Bookmarks />
      <Page />
      <Taskbar />
    </div>
  );
}
